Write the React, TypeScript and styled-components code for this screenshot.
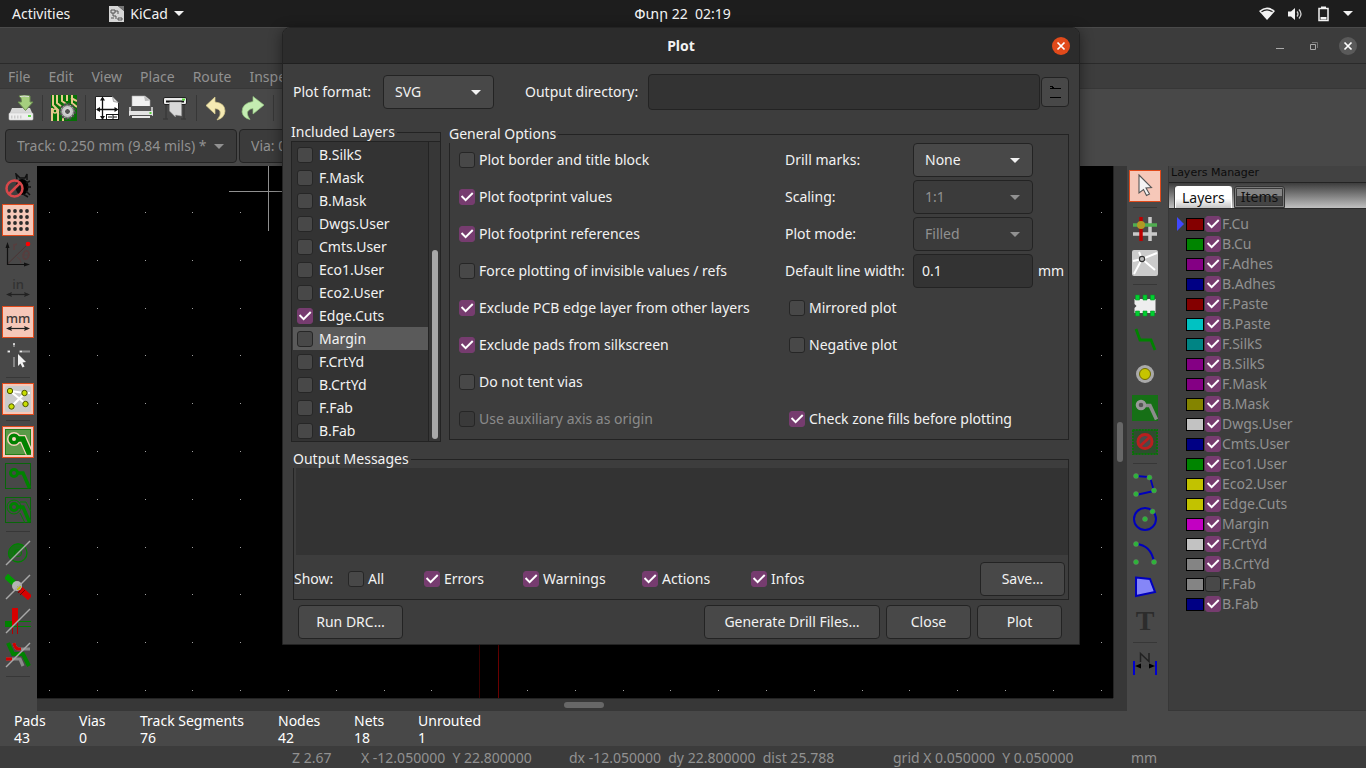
import React from "react";
import styled, { createGlobalStyle, css } from "styled-components";

const c = {
  shell: "#1d1d1d",
  window: "#3d3d3d",
  toolbar: "#484848",
  field: "#333333",
  line: "#232323",
  softLine: "#373737",
  text: "#f2f2f2",
  dim: "#919191",
  accent: "#763c6f",
  orange: "#e14a1b",
  active: "#f6c8b9",
};

const GlobalStyle = createGlobalStyle`
  *, *::before, *::after { box-sizing: border-box; }
  body {
    margin: 0;
    background: ${c.toolbar};
    color: ${c.text};
    font: 14px/18px "Noto Sans", "DejaVu Sans", sans-serif;
  }
  button, input, select, textarea { font: inherit; color: inherit; margin: 0; }
`;

const Desktop = styled.div`
  position: relative;
  display: flex;
  flex-direction: column;
  min-height: 100vh;
  overflow: hidden;
`;

/* ---------- shell bar ---------- */

const ShellBar = styled.header`
  display: grid;
  grid-template-columns: 1fr auto 1fr;
  align-items: center;
  height: 27px;
  padding: 0 13px 0 12px;
  background: ${c.shell};
`;

const ShellGroup = styled.div<{ $end?: boolean }>`
  display: flex;
  align-items: center;
  gap: ${(p) => (p.$end ? "12px" : "38px")};
  justify-content: ${(p) => (p.$end ? "flex-end" : "flex-start")};
`;

const ShellButton = styled.button`
  display: flex;
  align-items: center;
  gap: 6px;
  padding: 0;
  border: 0;
  background: none;
  white-space: pre;
`;

/* ---------- main window chrome ---------- */

const TitleBar = styled.div`
  display: flex;
  align-items: center;
  justify-content: flex-end;
  gap: 16px;
  height: 37px;
  padding-right: 9px;
  background: #3c3c3c;
  border-top: 1px solid #4a4a4a;
  border-bottom: 1px solid #2a2a2a;
`;

const WindowButton = styled.button<{ $round?: boolean }>`
  display: grid;
  place-items: center;
  width: 18px;
  height: 18px;
  padding: 0;
  border: 0;
  border-radius: 50%;
  background: ${(p) => (p.$round ? "#5a5a5a" : "none")};
`;

const MenuBar = styled.nav`
  display: flex;
  gap: 18px;
  height: 25px;
  padding: 2px 8px 0;
  background: ${c.window};
  border-bottom: 1px solid ${c.softLine};
`;

const MenuButton = styled.button`
  padding: 0;
  border: 0;
  background: none;
  color: ${c.dim};
`;

const ToolBar = styled.div<{ $vertical?: boolean; $pad: string }>`
  display: flex;
  flex-direction: ${(p) => (p.$vertical ? "column" : "row")};
  gap: 2px;
  padding: ${(p) => p.$pad};
  background: ${c.toolbar};
`;

const ToolButton = styled.button<{ $active?: boolean }>`
  display: grid;
  place-items: center;
  flex: none;
  width: 32px;
  height: 32px;
  padding: 0;
  border: 1px solid ${(p) => (p.$active ? c.orange : "transparent")};
  background: ${(p) => (p.$active ? c.active : "none")};
`;

const Separator = styled.span<{ $vertical?: boolean }>`
  flex: none;
  background: ${c.softLine};
  ${(p) =>
    p.$vertical
      ? css`
          width: 1px;
          height: 26px;
          margin: 3px 3px 0;
        `
      : css`
          width: 24px;
          height: 1px;
          margin: 3px 4px;
        `}
`;

const TrackBar = styled.div`
  display: flex;
  gap: 2px;
  padding: 4px 5px 3px;
`;

/* ---------- form parts ---------- */

const SelectBox = styled.span<{ $width: number }>`
  position: relative;
  display: block;
  flex: none;
  width: ${(p) => p.$width}px;
`;

const NativeSelect = styled.select<{ $dim?: boolean }>`
  appearance: none;
  display: block;
  width: 100%;
  height: 34px;
  padding: 0 28px 0 11px;
  border: 1px solid ${c.line};
  border-radius: 4px;
  background: ${(p) => (p.$dim ? "#3b3b3b" : c.toolbar)};
  color: ${(p) => (p.$dim ? c.dim : c.text)};
  opacity: 1;
`;

const Caret = styled.svg`
  display: block;
  width: 10px;
  height: 5px;
`;

const SelectCaret = styled(Caret)`
  position: absolute;
  right: 13px;
  top: 15px;
  pointer-events: none;
`;

const TextInput = styled.input<{ $height: number }>`
  flex: 1;
  width: 100%;
  min-width: 0;
  height: ${(p) => p.$height}px;
  padding: 0 8px 2px;
  border: 1px solid ${c.line};
  border-radius: 4px;
  background: ${c.field};
`;

const CheckInput = styled.input.attrs({ type: "checkbox" })`
  appearance: none;
  flex: none;
  display: block;
  width: 16px;
  height: 16px;
  border: 1px solid #262626;
  border-radius: 3px;
  background: #484848;

  &:checked {
    border-color: ${c.accent};
    background: ${c.accent};
  }
  &:checked::before {
    content: "";
    display: block;
    width: 14px;
    height: 14px;
    background: #fff;
    clip-path: polygon(6% 48%, 16% 38%, 40% 62%, 86% 16%, 96% 26%, 40% 82%);
  }
  &:disabled {
    background: #3a3a3a;
  }
`;

const CheckLabel = styled.label<{ $dim?: boolean; $gap?: number }>`
  display: flex;
  align-items: center;
  gap: ${(p) => p.$gap ?? 4}px;
  color: ${(p) => (p.$dim ? "#8b8b8b" : "inherit")};
  white-space: nowrap;
`;

const PushButton = styled.button<{ $width: number }>`
  flex: none;
  width: ${(p) => p.$width}px;
  height: 34px;
  padding: 0;
  border: 1px solid ${c.line};
  border-radius: 4px;
  background: ${c.toolbar};
`;

/* ---------- workspace ---------- */

const Workspace = styled.main`
  display: flex;
  flex: 1;
  min-height: 545px;
`;

const CanvasArea = styled.div`
  display: grid;
  flex: 1;
  min-width: 0;
  grid-template-columns: 1fr 14px;
  grid-template-rows: 1fr 13px;
  background: #373737;
`;

const Board = styled.svg`
  display: block;
  width: 100%;
  height: 100%;
  min-height: 0;
  background: #000;
`;

const ScrollTrack = styled.div<{ $vertical?: boolean }>`
  padding: ${(p) => (p.$vertical ? "256px 0 0 3px" : "3px 0 0 527px")};
  border-${(p) => (p.$vertical ? "left" : "top")}: 1px solid ${c.line};
`;

const ScrollThumb = styled.div<{ $vertical?: boolean }>`
  width: ${(p) => (p.$vertical ? "6px" : "40px")};
  height: ${(p) => (p.$vertical ? "40px" : "6px")};
  border-radius: 3px;
  background: #676767;
`;

const LayerPanel = styled.aside`
  display: flex;
  flex-direction: column;
  width: 198px;
  border-left: 1px solid ${c.softLine};
  border-bottom: 1px solid ${c.softLine};
  background: ${c.window};
`;

const PanelCaption = styled.div`
  height: 16px;
  padding-left: 2px;
  background: #424242;
  color: #0c0c0c;
  font: 11px/13px "DejaVu Sans", sans-serif;
`;

const Tabs = styled.div`
  display: flex;
  align-items: flex-end;
  gap: 2px;
  height: 27px;
  padding: 0 6px;
  background: linear-gradient(#3d3d3d, #c0c0c0);
  border-top: 1px solid ${c.line};
  border-bottom: 1px solid #2a2a2a;
`;

const Tab = styled.button<{ $active?: boolean }>`
  height: 22px;
  padding: 0 6px;
  border: 1px solid ${(p) => (p.$active ? "#ffffff" : "#333333")};
  border-bottom-width: ${(p) => (p.$active ? "0" : "1px")};
  border-radius: 3px 3px 0 0;
  background: ${(p) =>
    p.$active ? "linear-gradient(#fff 55%, #c4c4c4)" : "linear-gradient(#858585 45%, #454545 46%)"};
  box-shadow: ${(p) => (p.$active ? "-1px 0 0 #444" : "inset 0 0 0 1px #7a7a7a, inset 0 0 0 2px #3a3a3a")};
  color: #111;
  line-height: 18px;
`;

const LayerList = styled.ul`
  margin: 5px 0 0;
  padding: 0;
  list-style: none;
`;

const LayerRow = styled.li`
  display: flex;
  align-items: center;
  height: 20px;
  padding-left: 8px;
  color: ${c.dim};
`;

const LayerMarker = styled.svg`
  width: 8px;
  height: 14px;
  margin-right: 1px;
`;

const Swatch = styled.span<{ $color: string }>`
  width: 18px;
  height: 13px;
  margin-right: 1px;
  border: 1px solid #000;
  background: ${(p) => p.$color};
`;

/* ---------- bottom bars ---------- */

const InfoBar = styled.dl`
  display: flex;
  height: 35px;
  margin: 0;
  padding: 1px 14px 0;
  line-height: 17px;
  color: #fff;
`;

const InfoItem = styled.div<{ $width: number }>`
  width: ${(p) => p.$width}px;
  white-space: nowrap;

  dt, dd { margin: 0; }
`;

const StatusBar = styled.footer`
  display: grid;
  grid-template-columns: 69px 208px 324px 238px 1fr;
  align-items: center;
  height: 22px;
  padding: 2px 0 0 292px;
  background: #3c3c3c;
  color: ${c.dim};
  white-space: pre;
`;

/* ---------- dialog ---------- */

const Dialog = styled.section`
  position: absolute;
  top: 27px;
  left: 282px;
  right: 286px;
  border: 1px solid ${c.line};
  border-radius: 8px 8px 0 0;
  background: ${c.window};
  box-shadow: 0 3px 14px rgba(0, 0, 0, 0.45);
`;

const DialogTitle = styled.header`
  display: grid;
  grid-template-columns: 18px 1fr 18px;
  align-items: center;
  height: 36px;
  padding: 0 9px;
  border-bottom: 1px solid #202020;
  border-radius: 7px 7px 0 0;
  background: #2c2c2c;

  h1 {
    margin: 0;
    font-size: 14px;
    line-height: 18px;
    text-align: center;
  }
`;

const DialogClose = styled.button`
  display: grid;
  place-items: center;
  width: 18px;
  height: 18px;
  padding: 0;
  border: 0;
  border-radius: 50%;
  background: ${c.orange};
`;

const DialogBody = styled.form`
  padding: 10px 10px 5px;
`;

const FormatRow = styled.div`
  display: flex;
  align-items: center;
  height: 36px;
`;

const FormatLabel = styled.label<{ $width: number; $indent?: number }>`
  flex: none;
  width: ${(p) => p.$width}px;
  margin-left: ${(p) => p.$indent ?? 0}px;
  white-space: nowrap;
`;

const BrowseButton = styled.button`
  display: grid;
  place-items: center;
  width: 28px;
  height: 30px;
  margin-left: 1px;
  padding: 0;
  border: 1px solid ${c.line};
  border-radius: 4px;
  background: ${c.toolbar};
`;

const Columns = styled.div`
  display: grid;
  grid-template-columns: 150px 1fr;
  gap: 8px;
  margin: 13px 0 8px -2px;
`;

const Group = styled.fieldset`
  min-width: 0;
  margin: 0;
  padding: 0;
  border: 1px solid ${c.line};

  legend {
    margin-left: -1px;
    padding: 0 2px 0 0;
    background: ${c.window};
    line-height: 18px;
  }
`;

const OptionsGroup = styled(Group)`
  margin: 2px 0;
`;

const LayerPicker = styled.div`
  display: grid;
  grid-template-columns: 1fr 12px;
  height: 300px;
  border-top: 1px solid ${c.line};
  background: ${c.field};
`;

const PickerRows = styled.div`
  height: 299px;
  padding: 1px 0 0 1px;
  overflow: hidden;
`;

const PickerRow = styled.div<{ $selected?: boolean }>`
  height: 23px;
  padding: 3px 4px;
  background: ${(p) => (p.$selected ? "#5a5a5a" : "none")};
`;

const PickerScroll = styled.div`
  padding: 108px 2px 2px 3px;
  border-left: 1px solid ${c.line};
  background: #373737;
`;

const PickerThumb = styled.div`
  height: 100%;
  border-radius: 3px;
  background: #a8a8a8;
`;

const OptionGrid = styled.div`
  display: grid;
  grid-template-columns: 326px 1fr;
  padding: 0 4px 3px 9px;
`;

const OptionColumn = styled.div`
  display: grid;
  grid-template-rows: repeat(8, 34px);
  row-gap: 3px;
`;

const SettingRow = styled.div`
  display: grid;
  grid-template-columns: 128px 120px 1fr;
  align-items: center;
  white-space: nowrap;
`;

const Unit = styled.span`
  padding-left: 5px;
`;

const PlotFlag = styled(CheckLabel)`
  padding-left: 4px;
`;

const Messages = styled.textarea`
  display: block;
  width: calc(100% - 2px);
  height: 87px;
  margin: 0 0 0 2px;
  padding: 4px;
  border: 0;
  resize: none;
  background: ${c.field};
`;

const ShowRow = styled.div`
  display: grid;
  grid-template-columns: 54px 76px 99px 119px 109px 1fr auto;
  align-items: center;
  padding: 7px 3px 3px 0;
`;

const Actions = styled.div`
  display: flex;
  gap: 6px;
  padding: 5px 7px 0 5px;
`;

const Spacer = styled.span`
  flex: 1;
`;

/* ---------- icons ---------- */

const Icon = ({ children, size = 26 }: { children: React.ReactNode; size?: number }) => (
  <svg width={size} height={size} viewBox="0 0 26 26" fill="none" aria-hidden="true">
    {children}
  </svg>
);

const G = "#008200";

const SaveIcon = (
  <Icon>
    <path d="M4 13h18l3 7H1z" fill="#d9d9d9" />
    <rect x="1" y="18" width="24" height="7" rx="1" fill="#eee" stroke="#c9c9c9" strokeWidth=".6" />
    <path d="M3 22h12" stroke="#ccc" strokeWidth="3" strokeDasharray="1.5 1.5" />
    <rect x="20" y="20" width="3" height="2" fill="#62d94c" />
    <path d="M11 1q5-1.500 11 0v6h3l-7.500 8.500L10 7h3.500q.5-4-2.500-6z" fill="#a5cf7e" stroke="#6b8d51" />
    <path d="M12 1.500q4-1 9 0" stroke="#e4e4e4" />
  </Icon>
);

const BoardSetupIcon = (
  <Icon>
    <rect width="26" height="26" fill="#067006" />
    <path d="M2 0v10l5 5v11M6 0v8l5 4M11 0v6l4 3M16 0v6M21 0v8l5 4M1 13v13M20 3l6 3M12 18v8" stroke="#e8c88c" strokeWidth="2" />
    <circle cx="4" cy="16" r="2" fill="#067006" stroke="#e8c88c" strokeWidth="1.500" />
    <circle cx="16.500" cy="16.500" r="7" fill="#bdbdbd" stroke="#4b4b4b" strokeWidth="3" strokeDasharray="2.200 1.464" />
    <circle cx="16.500" cy="16.500" r="6" fill="#c9c9c9" stroke="#7b7b7b" />
    <circle cx="16.500" cy="16.500" r="3" fill="#555" stroke="#eee" />
  </Icon>
);

const PageIcon = (
  <Icon>
    <path d="M1.500 1.500h17l6 6v17h-23z" fill="#fff" stroke="#222" />
    <path d="M18.500 1.500l1 5 5 1z" fill="#ddd" stroke="#777" strokeWidth=".6" />
    <path d="M8.500 3v20M3 14.500h20" stroke="#111" strokeWidth="1.300" />
    <path d="M8.500 1.500l-2.500 4h5zM8.500 25l-2.500-4h5zM2 14.500l4-2.500v5zM24.500 14.500l-4-2.500v5z" fill="#111" />
    <rect x="12.500" y="19.500" width="12" height="5" fill="#fff" stroke="#111" />
    <path d="M14 22h4M19 22h4M19 20v4" stroke="#111" />
  </Icon>
);

const PrinterIcon = (
  <Icon>
    <path d="M4 1h13l5 4v9H4z" fill="#f2f2f2" stroke="#aaa" strokeWidth=".6" />
    <path d="M16 1l1 5 5-.5z" fill="#bbb" />
    <path d="M1 12h24v9H1z" fill="#bdbdbd" />
    <path d="M3 11h20v5H3z" fill="#555" />
    <path d="M1 16h24v4H1z" fill="#e4e4e4" />
    <rect x="21.500" y="17" width="2" height="2" fill="#58d13c" />
    <path d="M4 22h18" stroke="#e9e9e9" strokeWidth="2" />
    <path d="M2 20.500h22" stroke="#555" />
  </Icon>
);

const PlotterIcon = (
  <Icon>
    <path d="M4 10v14M22 10v14M1 24h5M19 24h5" stroke="#3a3a3a" strokeWidth="1.500" />
    <rect x="1.500" y="2.500" width="23" height="7" rx="1.500" fill="#e9e9e9" stroke="#222" />
    <path d="M4 6.500h18" stroke="#111" strokeWidth="2" />
    <rect x="20" y="3.500" width="3" height="2" fill="#57d53b" />
    <path d="M7.500 7h12v14l-6-1v2l-6-6z" fill="#d9d9d9" stroke="#999" strokeWidth=".5" />
  </Icon>
);

const UndoIcon = (
  <Icon>
    <path d="M1 10.500L10 2v5q10 1 10 9-.5 7-8 9 4.500-5 3-9-1.500-2.500-5-2.500v5.500z" fill="#f5eab3" stroke="#d8cc8c" strokeWidth=".7" />
  </Icon>
);

const RedoIcon = (
  <Icon>
    <path d="M25 10L14 1.500v5Q3 8 3 17q1 6 8 7.500Q7 19 9 16q2-2.500 5-2.500V19z" fill="#c4ecb2" stroke="#92c47e" strokeWidth=".7" />
  </Icon>
);

const DrcOffIcon = (
  <Icon>
    <ellipse cx="17" cy="14" rx="6.500" ry="8" fill="#000" />
    <path d="M12 6l-1-5 4 4 5 0 2-4v6M21 10l4-2M22 14h4M21 18l4 4M18 21l5 3" stroke="#111" strokeWidth="1.500" />
    <circle cx="9.500" cy="15.500" r="8" fill="#33333366" stroke="#d8474a" strokeWidth="2.500" />
    <path d="M4 21L15 10" stroke="#d8474a" strokeWidth="2.500" />
  </Icon>
);

const GridIcon = (
  <Icon>
    {[4, 10, 16, 22].map((y) => [4, 10, 16, 22].map((x) => <circle key={`${x}-${y}`} cx={x} cy={y} r="1.900" fill="#2b2b2b" />))}
  </Icon>
);

const PolarIcon = (
  <Icon>
    <path d="M2.500 23L22 4" stroke="#4b3434" />
    <path d="M2.500 4v19.500h19" stroke="#111" strokeWidth="1.200" />
    <path d="M2.500 1L.5 7h4zM25 23.500l-6-2v4z" fill="#111" />
    <circle cx="23" cy="3" r="2.300" fill="#f00" />
    <path d="M9 9V3m0 2q1-2 3-2" stroke="#573e3e" strokeWidth="1.500" />
    <ellipse cx="21" cy="14" rx="2.800" ry="4.200" transform="rotate(15 21 14)" stroke="#573e3e" strokeWidth="1.800" />
    <path d="M18 14h6M12 16q4 2 4 6" stroke="#573e3e" />
  </Icon>
);

const UnitText = styled.text`
  font: 500 13px "Noto Sans", sans-serif;
`;

const LetterIcon = styled.span`
  color: #2c2c2c;
  font: bold 28px/30px "Liberation Serif", serif;
`;

const unitIcon = (unit: string, color: string) => (
  <Icon>
    <UnitText x="13" y="14" textAnchor="middle" fill={color}>
      {unit}
    </UnitText>
    <path d="M3 19.500h20" stroke="#222" strokeWidth="1.200" />
    <path d="M1 19.500l6-2.500-1 2.500 1 2.500zM25 19.500L19 17l1 2.500-1 2.500z" fill="#222" />
  </Icon>
);

const CursorIcon = (
  <Icon>
    <path d="M9 1v3M2 8.500h3M9 14v10M14 8.500h11" stroke="#8b8b8b" strokeWidth="1.800" />
    <path d="M8 1h2M3 8.500h2M15 8.500h2" stroke="#eee" strokeWidth="1.600" />
    <path d="M13 11l8 8-3.500.5 2 4-2 1-2-4-2.500 2.500z" fill="#f2f2f2" />
  </Icon>
);

const RatsnestIcon = (
  <Icon>
    <rect width="26" height="26" rx="2" fill="#cbcbcb" />
    <path d="M5 5l15 2h5M5 5l16 13M20 7L7 20" stroke="#fff" strokeWidth="2.200" />
    {[[5, 5], [19.5, 7], [6.5, 20.5], [20.5, 18]].map(([x, y]) => (
      <circle key={`${x}-${y}`} cx={x} cy={y} r="2.700" fill="#c9df00" stroke="#4e5600" />
    ))}
  </Icon>
);

const zoneIcon = (mode: "filled" | "none" | "outline") => {
  const filled = mode === "filled";
  return (
    <Icon>
      <rect
        x=".5"
        y=".5"
        width="25"
        height="25"
        fill={filled ? "#5a9a48" : "none"}
        stroke={filled ? "#1f7e17" : "#08660a"}
      />
      {filled && <path d="M9 10h9l6.500 14.500" stroke="#f6d2bd" strokeWidth="8" />}
      {filled && <circle cx="9" cy="10" r="7" fill="#f6d2bd" />}
      {filled && <path d="M10 10h8l6.500 15" stroke={G} strokeWidth="5.500" />}
      {filled && <circle cx="9" cy="10" r="5.500" fill={G} />}
      {mode === "outline" && <path d="M15 5h6l4.500 9M15 16l5 10" stroke={G} />}
      {mode === "outline" && <circle cx="9" cy="10" r="7" stroke={G} />}
      {!filled && <path d="M10 10h8l6.500 15" stroke={G} strokeWidth="3.500" />}
      <circle cx="9" cy="10" r="3.500" fill={filled ? "#f6d2bd" : c.toolbar} stroke={G} strokeWidth="3" />
    </Icon>
  );
};

const Slash = <path d="M1 25L25 1" stroke="#a8a8a8" strokeWidth="1.400" />;

const PadOutlineIcon = (
  <Icon>
    <circle cx="13" cy="13" r="9" stroke={G} strokeWidth="1.300" />
    <path d="M6 20a9 9 0 0 1 14-13z" fill="#167016" stroke={G} />
    <circle cx="13" cy="13" r="3.500" stroke={G} />
    {Slash}
  </Icon>
);

const ViaOutlineIcon = (
  <Icon>
    <path d="M1 2l9 8" stroke="#009c00" strokeWidth="6" />
    <path d="M15 15l10 9" stroke="#d90000" strokeWidth="6" />
    <path d="M17 14l-4 5M20 16l-5 5" stroke="#700" />
    <circle cx="12" cy="12" r="5" fill="#b4b4b4" />
    <path d="M12 12h4q0 4-4 4z" fill="#c3b800" />
    {Slash}
  </Icon>
);

const TrackOutlineIcon = (
  <Icon>
    <path d="M0 13.500h26M0 18.500h26" stroke={G} />
    <path d="M0 13h8v6H0z" fill={G} />
    <path d="M7 0h6v13l-6 6z" fill="#d60000" />
    <path d="M7.500 18v8M12.500 13v13" stroke="#b40000" />
    {Slash}
  </Icon>
);

const ContrastIcon = (
  <Icon>
    <path d="M9 1q1 6 5 6h11" stroke="#8a8a8a" strokeWidth="3.200" />
    <path d="M9 1q1 6 5 6h2" stroke="#d00000" strokeWidth="3.200" />
    <path d="M1 17h14l3 7" stroke="#8a8a8a" strokeWidth="3.200" />
    <path d="M1 17h6" stroke="#d00000" strokeWidth="3.200" />
    <path d="M3 1l5 11h10l6 12" stroke={G} strokeWidth="4" />
    {Slash}
  </Icon>
);

const ArrowIcon = (
  <Icon>
    <path d="M7 2l12.500 12.500-5.500.5 3.500 6-3 1.500-3-6L7 20z" fill="#f4f4f4" stroke="#555" strokeWidth="1.100" />
  </Icon>
);

const HighlightNetIcon = (
  <Icon>
    <path d="M18 1v24M1 18h24" stroke="#c9c9c9" strokeWidth="3.500" />
    <path d="M1 9h24" stroke="#50ad50" strokeWidth="3.500" />
    <path d="M9 1v24" stroke="#bd0000" strokeWidth="3.500" />
    <circle cx="9" cy="9" r="4" fill="#b19a25" />
  </Icon>
);

const LocalRatsnestIcon = (
  <Icon>
    <rect width="26" height="26" rx="2" fill="#cbcbcb" />
    <path d="M10 9L7 2M10 9L25 3M10 9l13 11M10 9L2 24M10 9L1 11" stroke="#fff" strokeWidth="2" />
    <circle cx="10" cy="9" r="2.600" fill="#bbb" stroke="#333" strokeWidth="1.100" />
  </Icon>
);

const FootprintIcon = (
  <Icon>
    <path d="M2.500 6h21v14h-21v-5l2-2-2-2z" fill="#eee" />
    <path d="M3.500 2h4v5h-4zM11 2h4v5h-4zM18.500 2h4v5h-4zM3.500 18h4v5h-4zM11 18h4v5h-4zM18.500 18h4v5h-4z" fill="#00d030" stroke="#0a9226" strokeWidth=".6" />
  </Icon>
);

const RouteIcon = (
  <Icon>
    <path d="M4 2l4 11h11l4 10" stroke={G} strokeWidth="2.800" />
  </Icon>
);

const ViaIcon = (
  <Icon>
    <circle cx="13" cy="13" r="9" fill="#a9a9a9" />
    <circle cx="13" cy="13" r="5.500" fill="#c6c400" stroke="#706b00" />
  </Icon>
);

const AddZoneIcon = (
  <Icon>
    <rect width="26" height="26" fill="#167016" />
    <path d="M10 10.500h8l6.500 14" stroke="#8c8c8c" strokeWidth="3.500" />
    <circle cx="9" cy="10" r="3.800" fill="#555" stroke="#999" strokeWidth="3" />
  </Icon>
);

const KeepoutIcon = (
  <Icon>
    <rect x=".7" y=".7" width="24.600" height="24.600" fill="#2f4d2f" stroke="#077407" strokeWidth="2.500" strokeDasharray="2 1" />
    <circle cx="13" cy="12.500" r="7" fill="#4a4a4a" stroke="#b91f1f" strokeWidth="3" />
    <path d="M8 17L18 8" stroke="#b91f1f" strokeWidth="3" />
  </Icon>
);

const Dots = ({ points }: { points: number[][] }) => (
  <>
    {points.map(([x, y]) => (
      <circle key={`${x}-${y}`} cx={x} cy={y} r="2.500" fill="#2bb637" stroke="#6b806b" strokeWidth=".5" />
    ))}
  </>
);

const PolylineIcon = (
  <Icon>
    <path d="M4 4l14 1 4 14-18 4" stroke="#0000bd" strokeWidth="1.800" />
    <Dots points={[[4, 4], [17.5, 5.5], [22, 18.5], [4, 22]]} />
  </Icon>
);

const CircleIcon = (
  <Icon>
    <circle cx="13" cy="13" r="11" stroke="#0000bd" strokeWidth="2" />
    <Dots points={[[13, 13], [20.5, 5.5]]} />
  </Icon>
);

const ArcIcon = (
  <Icon>
    <path d="M4 4q15 1 18 18" stroke="#0000bd" strokeWidth="2" />
    <Dots points={[[4, 4], [4, 22], [22, 22]]} />
  </Icon>
);

const PolygonIcon = (
  <Icon>
    <path d="M4 3.500l14 1.500 5 13L4 22z" fill="#8586f7" stroke="#0000bd" strokeWidth="2" />
  </Icon>
);

const TextIcon = <LetterIcon>T</LetterIcon>;

const DimensionIcon = (
  <Icon>
    <path d="M2 10v14M24 10v14" stroke="#0000d0" strokeWidth="2" />
    <path d="M5 15h16" stroke="#444" />
    <path d="M3 15l6-2.500v5zM23 15l-6-2.500v5z" fill="#000" />
    <path d="M8.500 11V2.500l8.500 8V2" stroke="#222" strokeWidth="1.500" />
  </Icon>
);

const CrossIcon = ({ color = "#fff" }: { color?: string }) => (
  <svg width="18" height="18" viewBox="0 0 18 18" aria-hidden="true">
    <path d="M5.500 5.500l7 7M12.500 5.500l-7 7" stroke={color} strokeWidth="1.700" />
  </svg>
);

const DownCaret = ({ color = c.text }: { color?: string }) => (
  <Caret viewBox="0 0 10 5" aria-hidden="true">
    <path d="M0 0h10L5 5z" fill={color} />
  </Caret>
);

/* ---------- data ---------- */

type Tool = { label: string; icon: React.ReactNode; active?: boolean } | "sep";

const topTools: Tool[] = [
  { label: "Save board", icon: SaveIcon },
  "sep",
  { label: "Board setup", icon: BoardSetupIcon },
  "sep",
  { label: "Page settings", icon: PageIcon },
  { label: "Print board", icon: PrinterIcon },
  { label: "Plot", icon: PlotterIcon },
  "sep",
  { label: "Undo", icon: UndoIcon },
  { label: "Redo", icon: RedoIcon },
  "sep",
];

const leftTools: Tool[] = [
  { label: "Disable DRC", icon: DrcOffIcon },
  { label: "Show grid", icon: GridIcon, active: true },
  { label: "Polar coordinates", icon: PolarIcon },
  { label: "Inches", icon: unitIcon("in", "#323232") },
  { label: "Millimeters", icon: unitIcon("mm", "#3d3735"), active: true },
  { label: "Full-window crosshairs", icon: CursorIcon },
  "sep",
  { label: "Show ratsnest", icon: RatsnestIcon, active: true },
  "sep",
  { label: "Show filled zones", icon: zoneIcon("filled"), active: true },
  { label: "Hide filled zones", icon: zoneIcon("none") },
  { label: "Show zone outlines", icon: zoneIcon("outline") },
  "sep",
  { label: "Sketch pads", icon: PadOutlineIcon },
  { label: "Sketch vias", icon: ViaOutlineIcon },
  { label: "Sketch tracks", icon: TrackOutlineIcon },
  { label: "High contrast", icon: ContrastIcon },
  "sep",
];

const rightTools: Tool[] = [
  { label: "Select", icon: ArrowIcon, active: true },
  "sep",
  { label: "Highlight net", icon: HighlightNetIcon },
  { label: "Local ratsnest", icon: LocalRatsnestIcon },
  "sep",
  { label: "Add footprint", icon: FootprintIcon },
  { label: "Route tracks", icon: RouteIcon },
  { label: "Add via", icon: ViaIcon },
  { label: "Add filled zone", icon: AddZoneIcon },
  { label: "Add keepout area", icon: KeepoutIcon },
  "sep",
  { label: "Draw line", icon: PolylineIcon },
  { label: "Draw circle", icon: CircleIcon },
  { label: "Draw arc", icon: ArcIcon },
  { label: "Draw polygon", icon: PolygonIcon },
  { label: "Add text", icon: TextIcon },
  "sep",
  { label: "Add dimension", icon: DimensionIcon },
];

const layers: [string, string, boolean][] = [
  ["F.Cu", "#840000", true],
  ["B.Cu", "#008400", true],
  ["F.Adhes", "#840084", true],
  ["B.Adhes", "#000084", true],
  ["F.Paste", "#840000", true],
  ["B.Paste", "#00c2c2", true],
  ["F.SilkS", "#008484", true],
  ["B.SilkS", "#840084", true],
  ["F.Mask", "#840084", true],
  ["B.Mask", "#848400", true],
  ["Dwgs.User", "#c2c2c2", true],
  ["Cmts.User", "#000084", true],
  ["Eco1.User", "#008400", true],
  ["Eco2.User", "#c2c200", true],
  ["Edge.Cuts", "#c2c200", true],
  ["Margin", "#c200c2", true],
  ["F.CrtYd", "#c2c2c2", true],
  ["B.CrtYd", "#848484", true],
  ["F.Fab", "#848484", false],
  ["B.Fab", "#000084", true],
];

const plotLayers = [
  "B.SilkS", "F.Mask", "B.Mask", "Dwgs.User", "Cmts.User", "Eco1.User", "Eco2.User",
  "Edge.Cuts", "Margin", "F.CrtYd", "B.CrtYd", "F.Fab", "B.Fab",
];

const plotOptions: { label: string; on?: boolean; off?: boolean }[] = [
  { label: "Plot border and title block" },
  { label: "Plot footprint values", on: true },
  { label: "Plot footprint references", on: true },
  { label: "Force plotting of invisible values / refs" },
  { label: "Exclude PCB edge layer from other layers", on: true },
  { label: "Exclude pads from silkscreen", on: true },
  { label: "Do not tent vias" },
  { label: "Use auxiliary axis as origin", off: true },
];

const info: [string, string, number][] = [
  ["Pads", "43", 65],
  ["Vias", "0", 61],
  ["Track Segments", "76", 138],
  ["Nodes", "42", 76],
  ["Nets", "18", 64],
  ["Unrouted", "1", 80],
];

/* ---------- composed parts ---------- */

const Tools = ({ items, vertical, pad }: { items: Tool[]; vertical?: boolean; pad: string }) => (
  <ToolBar role="toolbar" $vertical={vertical} $pad={pad}>
    {items.map((item, i) =>
      item === "sep" ? (
        <Separator key={i} $vertical={!vertical} />
      ) : (
        <ToolButton key={i} type="button" aria-label={item.label} $active={item.active}>
          {item.icon}
        </ToolButton>
      ),
    )}
  </ToolBar>
);

type SelectProps = { id: string; label?: string; value: string; width: number; dim?: boolean };

const Select = ({ id, label, value, width, dim }: SelectProps) => (
  <SelectBox $width={width}>
    <NativeSelect id={id} aria-label={label} disabled={dim} $dim={dim} defaultValue={value}>
      <option value={value}>{value}</option>
    </NativeSelect>
    <SelectCaret viewBox="0 0 10 5" aria-hidden="true">
      <path d="M0 0h10L5 5z" fill={dim ? c.dim : c.text} />
    </SelectCaret>
  </SelectBox>
);

const pitch = 47.8;

const BoardCanvas = () => (
  <Board role="img" aria-label="Board canvas" shapeRendering="crispEdges">
    {Array.from({ length: 12 }, (_, row) =>
      Array.from({ length: 40 }, (_, col) => (
        <rect
          key={`${row}-${col}`}
          x={Math.round(12 + col * pitch)}
          y={Math.round(46 + row * pitch)}
          width="1"
          height="1"
          fill="#a0a0a0"
        />
      )),
    )}
    <path d="M231.500 0v65M192 25.500h79" stroke="#909090" />
    <path d="M442.500 400v200" stroke="#3a0000" />
    <path d="M461.500 400v200" stroke="#6a0000" />
  </Board>
);

const PlotDialog = () => (
  <Dialog role="dialog" aria-labelledby="plot-title">
    <DialogTitle>
      <span />
      <h1 id="plot-title">Plot</h1>
      <DialogClose type="button" aria-label="Close dialog">
        <CrossIcon />
      </DialogClose>
    </DialogTitle>
    <DialogBody>
      <FormatRow>
        <FormatLabel htmlFor="format" $width={90}>Plot format:</FormatLabel>
        <Select id="format" value="SVG" width={111} />
        <FormatLabel htmlFor="outdir" $width={123} $indent={31}>Output directory:</FormatLabel>
        <TextInput id="outdir" type="text" $height={36} />
        <BrowseButton type="button" aria-label="Browse">
          <svg width="12" height="14" viewBox="0 0 12 14" shapeRendering="crispEdges" aria-hidden="true">
            <path d="M1 1h3v1h-3zM3 2h2v1h-2zM1 3h11v1h-11zM1 12h11v1h-11z" fill="#000" />
          </svg>
        </BrowseButton>
      </FormatRow>

      <Columns>
        <Group>
          <legend>Included Layers</legend>
          <LayerPicker>
            <PickerRows>
              {plotLayers.map((name) => (
                <PickerRow key={name} $selected={name === "Margin"}>
                  <CheckLabel $gap={6}>
                    <CheckInput defaultChecked={name === "Edge.Cuts"} />
                    {name}
                  </CheckLabel>
                </PickerRow>
              ))}
            </PickerRows>
            <PickerScroll>
              <PickerThumb />
            </PickerScroll>
          </LayerPicker>
        </Group>

        <OptionsGroup>
          <legend>General Options</legend>
          <OptionGrid>
            <OptionColumn>
              {plotOptions.map((o) => (
                <CheckLabel key={o.label} $dim={o.off}>
                  <CheckInput defaultChecked={o.on} disabled={o.off} />
                  {o.label}
                </CheckLabel>
              ))}
            </OptionColumn>
            <OptionColumn>
              <SettingRow>
                <label htmlFor="drill">Drill marks:</label>
                <Select id="drill" value="None" width={120} />
              </SettingRow>
              <SettingRow>
                <label htmlFor="scaling">Scaling:</label>
                <Select id="scaling" value="1:1" width={120} dim />
              </SettingRow>
              <SettingRow>
                <label htmlFor="mode">Plot mode:</label>
                <Select id="mode" value="Filled" width={120} dim />
              </SettingRow>
              <SettingRow>
                <label htmlFor="linewidth">Default line width:</label>
                <TextInput id="linewidth" type="text" defaultValue="0.1" $height={34} />
                <Unit>mm</Unit>
              </SettingRow>
              <PlotFlag>
                <CheckInput />
                Mirrored plot
              </PlotFlag>
              <PlotFlag>
                <CheckInput />
                Negative plot
              </PlotFlag>
              <span />
              <PlotFlag>
                <CheckInput defaultChecked />
                Check zone fills before plotting
              </PlotFlag>
            </OptionColumn>
          </OptionGrid>
        </OptionsGroup>
      </Columns>

      <Group>
        <legend>Output Messages</legend>
        <Messages aria-label="Output messages" readOnly />
        <ShowRow>
          <span>Show:</span>
          {["All", "Errors", "Warnings", "Actions", "Infos"].map((name) => (
            <CheckLabel key={name}>
              <CheckInput defaultChecked={name !== "All"} />
              {name}
            </CheckLabel>
          ))}
          <PushButton type="button" $width={85}>Save…</PushButton>
        </ShowRow>
      </Group>

      <Actions>
        <PushButton type="button" $width={105}>Run DRC…</PushButton>
        <Spacer />
        <PushButton type="button" $width={176}>Generate Drill Files…</PushButton>
        <PushButton type="button" $width={85}>Close</PushButton>
        <PushButton type="button" $width={85}>Plot</PushButton>
      </Actions>
    </DialogBody>
  </Dialog>
);

export default function App() {
  return (
    <Desktop>
      <GlobalStyle />
      <ShellBar>
        <ShellGroup>
          <ShellButton type="button">Activities</ShellButton>
          <ShellButton type="button">
            <svg width="16" height="16" viewBox="0 0 16 16" aria-hidden="true">
              <path d="M1 0h9l6 5v11H1z" fill="#d6d6d6" />
              <path d="M10 0h6v5z" fill="#777" />
              <path d="M3 4h4v3H3zM7 5h3v3M5 7v3h3v3M3 12h3M10 12h4v2h-4z" stroke="#555" fill="none" />
            </svg>
            KiCad
            <DownCaret />
          </ShellButton>
        </ShellGroup>
        <ShellButton type="button">{"Փտր 22  02:19"}</ShellButton>
        <ShellGroup $end>
          <svg width="16" height="14" viewBox="0 0 16 14" aria-label="Wi-Fi">
            <path d="M0 4q8-7 16 0L8 13z" fill="#f2f2f2" />
            <path d="M2.500 4.800q5.500-4 11 0" stroke={c.shell} strokeWidth="1.300" fill="none" />
          </svg>
          <svg width="16" height="14" viewBox="0 0 16 14" aria-label="Volume">
            <path d="M1 4.500h3L8 1v12L4 9.500H1z" fill="#f2f2f2" />
            <path d="M10 4.500q2 2.500 0 5M12 2.500q4 4.500 0 9" stroke="#cfcfcf" strokeWidth="1.300" fill="none" />
          </svg>
          <svg width="16" height="16" viewBox="0 0 16 16" aria-label="Battery">
            <path d="M4 2.500h9v12H4zM6 1.200h5" stroke="#f2f2f2" strokeWidth="1.500" fill="none" />
            <path d="M5.500 11h6v2.500h-6z" fill="#f2f2f2" />
          </svg>
          <DownCaret />
        </ShellGroup>
      </ShellBar>

      <TitleBar>
        <WindowButton type="button" aria-label="Minimize">
          <svg width="10" height="10" viewBox="0 0 10 10" aria-hidden="true">
            <path d="M1 7.500h8" stroke="#aaa" />
          </svg>
        </WindowButton>
        <WindowButton type="button" aria-label="Restore">
          <svg width="10" height="10" viewBox="0 0 10 10" fill="none" aria-hidden="true">
            <path d="M1.500 3.500h5v5h-5z" stroke="#aaa" />
            <path d="M3 1.500h5.500V7" stroke="#777" />
          </svg>
        </WindowButton>
        <WindowButton type="button" aria-label="Close" $round>
          <CrossIcon />
        </WindowButton>
      </TitleBar>
      <MenuBar>
        {["File", "Edit", "View", "Place", "Route", "Inspect"].map((name) => (
          <MenuButton key={name} type="button">{name}</MenuButton>
        ))}
      </MenuBar>
      <Tools items={topTools} pad="3px 5px 1px" />
      <TrackBar>
        <Select id="track" label="Track width" value="Track: 0.250 mm (9.84 mils) *" width={232} dim />
        <Select id="via" label="Via size" value="Via: 0.80 mm" width={232} dim />
      </TrackBar>

      <Workspace>
        <Tools items={leftTools} vertical pad="4px 3px 0 2px" />
        <CanvasArea>
          <BoardCanvas />
          <ScrollTrack $vertical>
            <ScrollThumb $vertical />
          </ScrollTrack>
          <ScrollTrack>
            <ScrollThumb />
          </ScrollTrack>
        </CanvasArea>
        <Tools items={rightTools} vertical pad="4px 7px 0 2px" />
        <LayerPanel>
          <PanelCaption>Layers Manager</PanelCaption>
          <Tabs role="tablist">
            <Tab type="button" role="tab" aria-selected="true" $active>Layers</Tab>
            <Tab type="button" role="tab" aria-selected="false">Items</Tab>
          </Tabs>
          <LayerList>
            {layers.map(([name, color, on], i) => (
              <LayerRow key={name}>
                <LayerMarker viewBox="0 0 8 14" aria-hidden="true">
                  {i === 0 && <path d="M0 0l7 7-7 7z" fill="#4048ff" />}
                </LayerMarker>
                <Swatch $color={color} />
                <CheckLabel $gap={1}>
                  <CheckInput defaultChecked={on} />
                  {name}
                </CheckLabel>
              </LayerRow>
            ))}
          </LayerList>
        </LayerPanel>
      </Workspace>

      <InfoBar>
        {info.map(([term, value, width]) => (
          <InfoItem key={term} $width={width}>
            <dt>{term}</dt>
            <dd>{value}</dd>
          </InfoItem>
        ))}
      </InfoBar>
      <StatusBar>
        <span>Z 2.67</span>
        <span>{"X -12.050000  Y 22.800000"}</span>
        <span>{"dx -12.050000  dy 22.800000  dist 25.788"}</span>
        <span>{"grid X 0.050000  Y 0.050000"}</span>
        <span>mm</span>
      </StatusBar>
      <PlotDialog />
    </Desktop>
  );
}
